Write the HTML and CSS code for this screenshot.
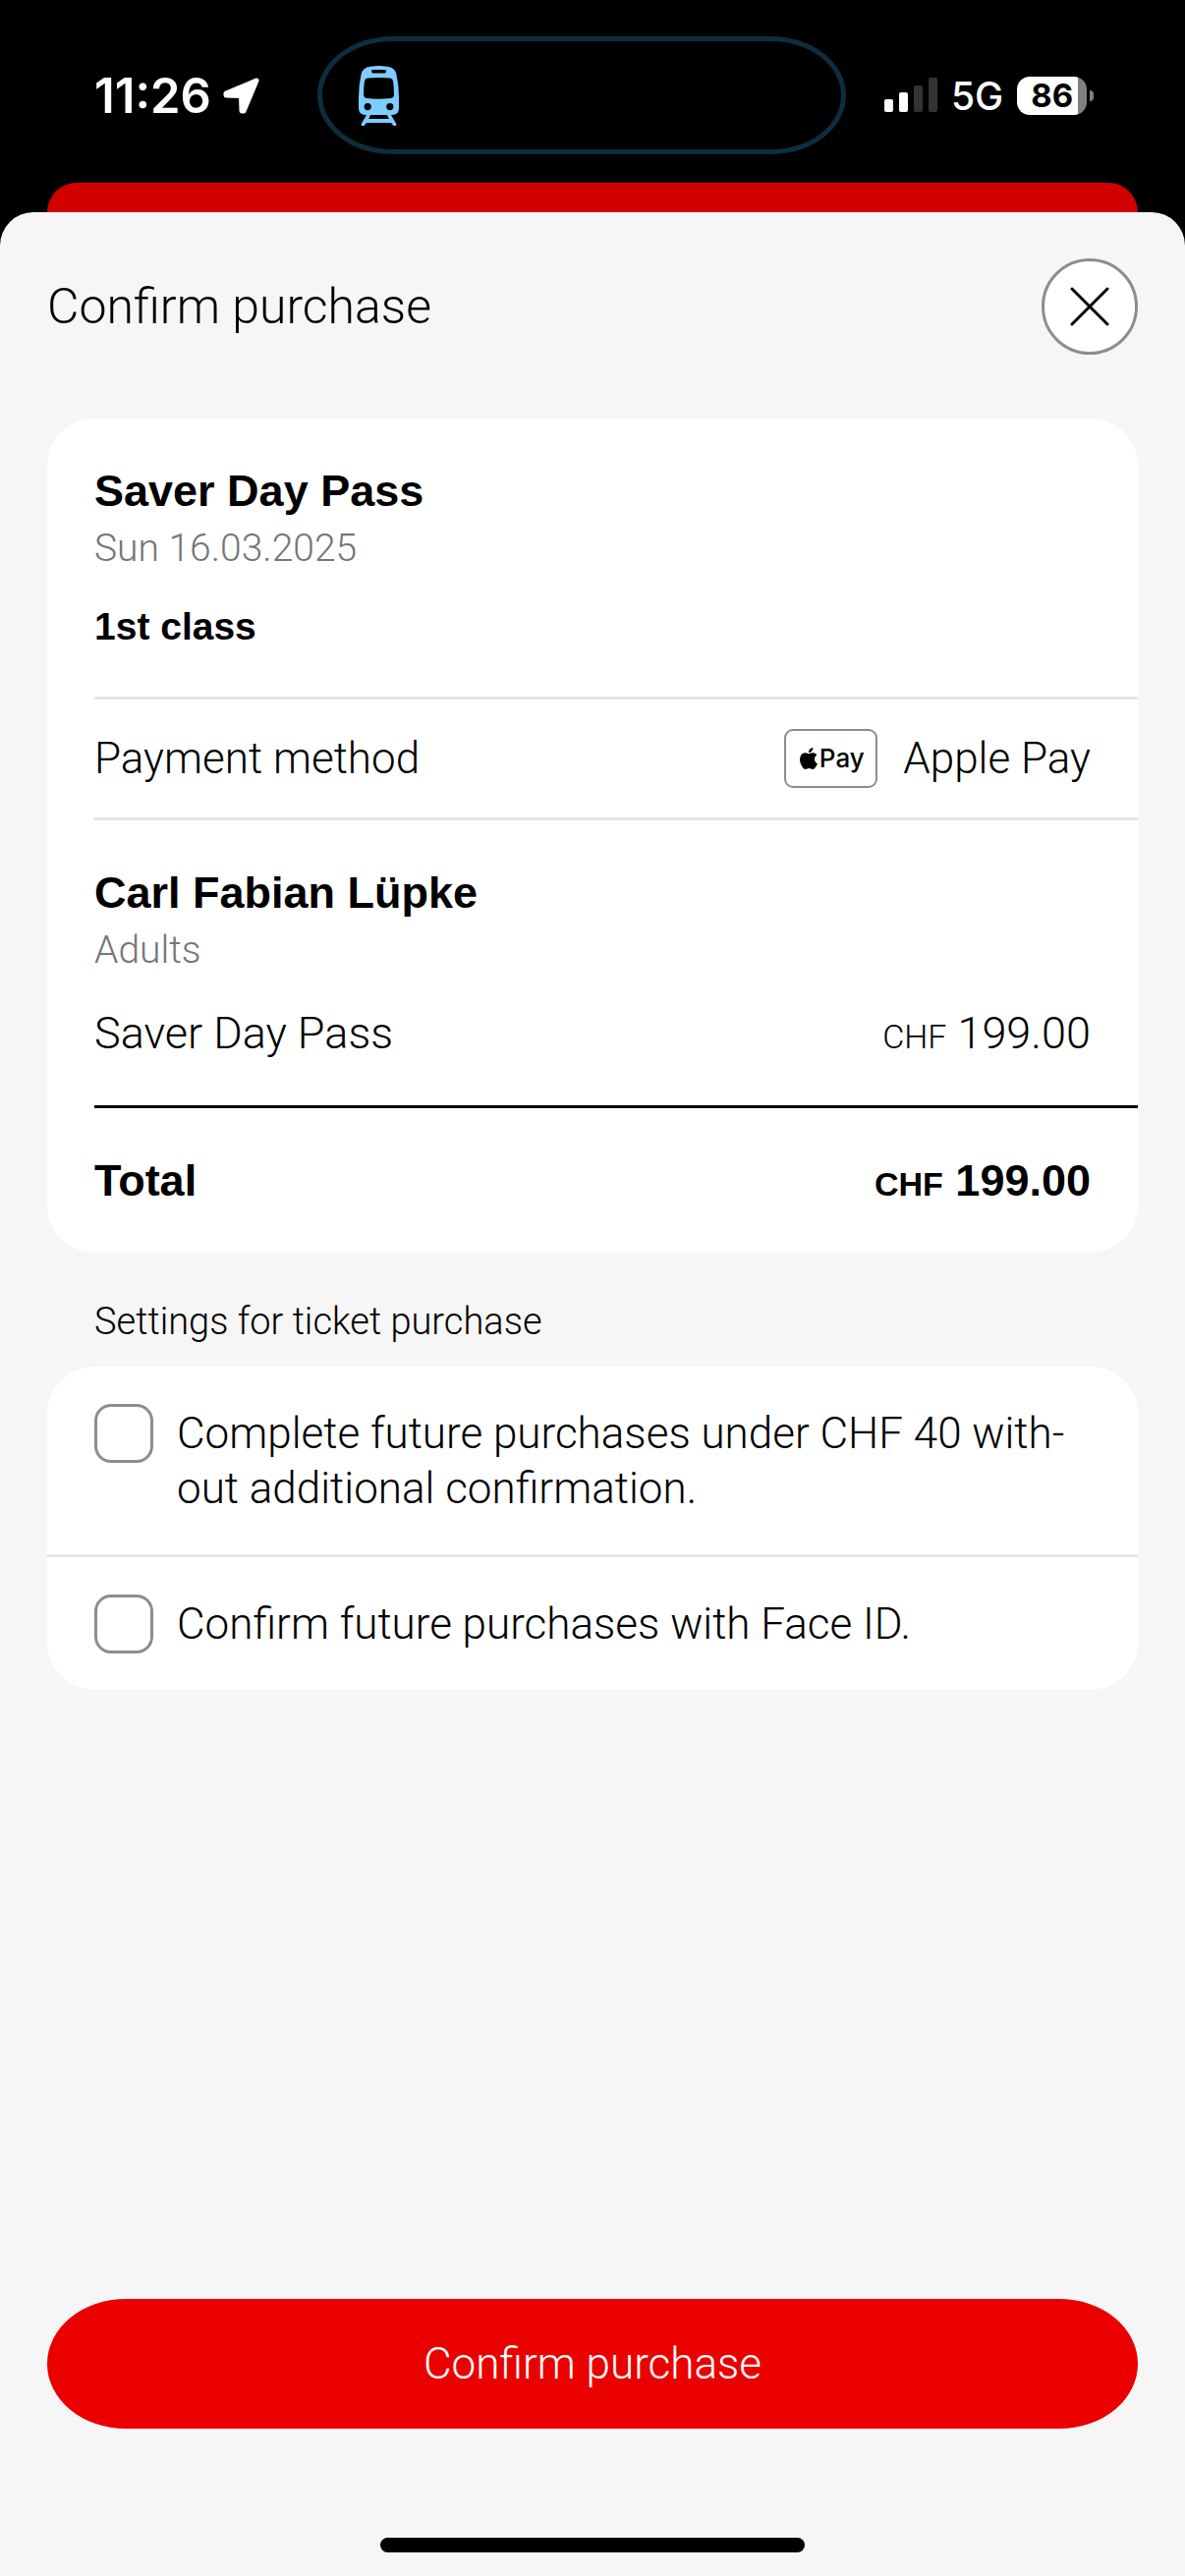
FILE: index.html
```html
<!DOCTYPE html>
<html lang="en">
<head>
<meta charset="utf-8">
<meta name="viewport" content="width=device-width, initial-scale=1">
<title>Confirm purchase</title>
<link rel="stylesheet" href="styles.css">
</head>
<body>
<header class="status">
  <div class="status-left">
    <span class="time">11:26</span>
    <svg class="arrow" viewBox="0 0 37 37" aria-hidden="true"><path d="M34 3 3 16 3 18 18.500 18.500 19 34 21 34Z" fill="#fff" stroke="#fff" stroke-width="5" stroke-linejoin="round"/></svg>
  </div>
  <div class="island">
    <svg class="train" viewBox="0 0 41 61" aria-hidden="true">
      <path fill="#7fccff" fill-rule="evenodd" d="M12 .8Q20.500-.8 29 .8Q37 1.500 38.500 9Q41 20 41 32V43Q41 50 34 50H33L38.500 59.500Q38.500 61 37 61H35.500L33 58H8L5.500 61H4Q2.500 61 2.500 59.500L8 50H7Q0 50 0 43V32Q0 20 2.500 9Q4 1.500 12 .8ZM14.500 4Q13 4 13 5.700Q13 7.500 14.500 7.500H26.500Q28 7.500 28 5.700Q28 4 26.500 4ZM9 12.600Q6.300 13 6 15.500Q5 22 5 29Q5 32.500 8 33Q20.500 34.500 33 33Q36 32.500 36 29Q36 22 35 15.500Q34.700 13 32 12.600Q20.500 11.400 9 12.600ZM9.200 38A3.600 3.600 0 1 0 9.200 45.200A3.600 3.600 0 1 0 9.200 38ZM31.800 38A3.600 3.600 0 1 0 31.800 45.200A3.600 3.600 0 1 0 31.800 38ZM12 50 10.200 54H30.800L29 50Z"/>
    </svg>
  </div>
  <div class="status-right">
    <svg class="signal" viewBox="0 0 54 36" aria-hidden="true">
      <rect x="0" y="22" width="9" height="13" rx="2" fill="#fff"/>
      <rect x="15" y="15" width="9" height="20" rx="2" fill="#fff"/>
      <rect x="30" y="8" width="9" height="27" rx="2" fill="#333"/>
      <rect x="45" y="0" width="9" height="35" rx="2" fill="#333"/>
    </svg>
    <span class="network">5G</span>
    <span class="battery"><span class="battery-level">86</span></span>
  </div>
</header>
<div class="backdrop"></div>
<main class="sheet">
  <div class="sheet-head">
    <h1 class="title">Confirm purchase</h1>
    <button class="close" type="button" aria-label="Close">
      <svg viewBox="0 0 40 40" width="40" height="40"><path d="M2 2 38 38M38 2 2 38" stroke="#000" stroke-width="3" stroke-linecap="round"/></svg>
    </button>
  </div>
  <section class="card summary">
    <div class="block">
      <h2 class="heading">Saver Day Pass</h2>
      <p class="sub">Sun 16.03.2025</p>
      <p class="travel-class">1st class</p>
    </div>
    <div class="payment">
      <span>Payment method</span>
      <span class="method">
        <span class="badge">
          <svg class="apple" viewBox="0 0 24 24" aria-hidden="true"><path d="M12.152 6.896c-.948 0-2.415-1.078-3.960-1.040-2.040.027-3.910 1.183-4.961 3.014-2.117 3.675-.546 9.103 1.519 12.090 1.013 1.454 2.208 3.090 3.792 3.039 1.520-.065 2.090-.987 3.935-.987 1.831 0 2.350.987 3.960.948 1.637-.026 2.676-1.480 3.676-2.948 1.156-1.688 1.636-3.325 1.662-3.415-.039-.013-3.182-1.221-3.220-4.857-.026-3.040 2.480-4.494 2.597-4.559-1.429-2.090-3.623-2.324-4.390-2.376-2-.156-3.675 1.090-4.610 1.090zM15.530 3.830c.843-1.012 1.400-2.427 1.245-3.830-1.207.052-2.662.805-3.532 1.818-.780.896-1.454 2.338-1.273 3.714 1.338.104 2.715-.688 3.559-1.701"/></svg>
          <span>Pay</span>
        </span>
        <span>Apple Pay</span>
      </span>
    </div>
    <div class="block">
      <h2 class="heading">Carl Fabian Lüpke</h2>
      <p class="sub">Adults</p>
      <div class="line item">
        <span>Saver Day Pass</span>
        <span><span class="currency">CHF</span> 199.00</span>
      </div>
    </div>
    <div class="line total">
      <span>Total</span>
      <span><span class="currency">CHF</span> 199.00</span>
    </div>
  </section>
  <h2 class="group-label">Settings for ticket purchase</h2>
  <section class="card">
    <label class="option">
      <input class="check" type="checkbox">
      <span class="option-text">Complete future purchases under CHF 40 with&shy;out additional confirmation.</span>
    </label>
    <label class="option">
      <input class="check" type="checkbox">
      <span class="option-text">Confirm future purchases with Face ID.</span>
    </label>
  </section>
  <div class="actions">
    <button class="confirm" type="button">Confirm purchase</button>
    <div class="home-bar"></div>
  </div>
</main>
</body>
</html>
```
FILE: styles.css
```css
* { box-sizing: border-box; margin: 0; }

body {
  min-height: 100vh;
  display: flex;
  flex-direction: column;
  background: #000;
  color: #000;
  font: 300 44px/60px Roboto, sans-serif;
}

.status {
  display: grid;
  grid-template-columns: 323px 1fr 345px;
  padding: 37px 0 29px;
  color: #fff;
  font-family: Inter, sans-serif;
}
.status-left, .status-right, .island { display: flex; align-items: center; }
.status-left { padding-left: 96px; gap: 12px; }
.time, .network { padding-top: 2px; }
.time { font-size: 49px; font-weight: 600; }
.arrow { width: 37px; height: 37px; }
.island {
  height: 120px;
  padding-left: 37px;
  border: 5px solid #0e2d3f;
  border-radius: 76px / 60px;
}
.train { width: 41px; height: 61px; }
.status-right { padding-left: 39px; gap: 14px; }
.signal { width: 54px; height: 36px; }
.network { font-size: 39px; font-weight: 500; }
.battery {
  position: relative;
  width: 71px;
  height: 39px;
  border-radius: 13px;
  background: linear-gradient(90deg, #fff 62px, #808080 62px);
  color: #000;
  text-align: center;
}
.battery::after {
  content: "";
  position: absolute;
  left: 74px;
  top: 14px;
  width: 4px;
  height: 11px;
  border-radius: 0 4px 4px 0;
  background: #808080;
}
.battery-level { display: block; font-size: 33px; font-weight: 700; line-height: 39px; }

.backdrop {
  height: 60px;
  margin: 0 48px -30px;
  border-radius: 30px 30px 0 0;
  background: #d00000;
}

.sheet {
  position: relative;
  flex: 1;
  display: flex;
  flex-direction: column;
  padding: 0 48px 24px;
  border-radius: 34px 34px 0 0;
  background: #f6f6f6;
}
.sheet-head {
  display: flex;
  align-items: center;
  justify-content: space-between;
  padding: 47px 0 65px;
}
.title { font-size: 50px; font-weight: 300; }
.close {
  display: grid;
  place-items: center;
  width: 98px;
  height: 98px;
  padding: 0;
  border: 3px solid #8d8d8d;
  border-radius: 50%;
  background: #fff;
}

.card { border-radius: 48px; background: #fff; }
.summary { padding-left: 48px; }
.block { padding: 44px 48px 43px 0; }
.heading, .travel-class, .total {
  font-family: "Liberation Sans", Arial, sans-serif;
  font-weight: 700;
}
.heading, .line { font-size: 45px; }
.sub { color: #767676; font-size: 39px; line-height: 56px; }
.travel-class { margin-top: 24px; font-size: 39px; line-height: 56px; }
.payment {
  display: flex;
  align-items: center;
  justify-content: space-between;
  height: 126px;
  padding-right: 48px;
  border: solid #e5e5e5;
  border-width: 3px 0;
}
.method { display: flex; align-items: center; gap: 26px; }
.badge {
  display: flex;
  align-items: center;
  justify-content: center;
  width: 95px;
  height: 60px;
  border: 2px solid #8d8d8d;
  border-radius: 9px;
  font: 500 26px/30px Inter, sans-serif;
}
.apple { width: 22px; height: 22px; }
.line { display: flex; justify-content: space-between; }
.item { margin-top: 27px; }
.currency { font-size: 34px; line-height: 1; }
.total {
  align-items: center;
  height: 150px;
  padding-right: 48px;
  border-top: 3px solid #000;
}

.group-label {
  margin: 42px 0 18px;
  padding-left: 48px;
  font-size: 38px;
  font-weight: 300;
  line-height: 56px;
}
.option {
  display: flex;
  align-items: flex-start;
  gap: 24px;
  padding: 38px 48px 37px;
}
.option + .option { border-top: 3px solid #e5e5e5; }
.check {
  appearance: none;
  flex: none;
  width: 60px;
  height: 60px;
  margin: 0;
  border: 3px solid #8d8d8d;
  border-radius: 17px;
  background: #fff;
}
.option-text { padding: 2px 0; line-height: 56px; }

.actions { margin-top: auto; }
.confirm {
  display: block;
  width: 100%;
  height: 132px;
  border: 0;
  border-radius: 80px / 66px;
  background: #eb0000;
  color: #fff;
  font: inherit;
}
.home-bar {
  width: 432px;
  height: 15px;
  margin: 111px auto 0;
  border-radius: 8px;
  background: #000;
}
```
